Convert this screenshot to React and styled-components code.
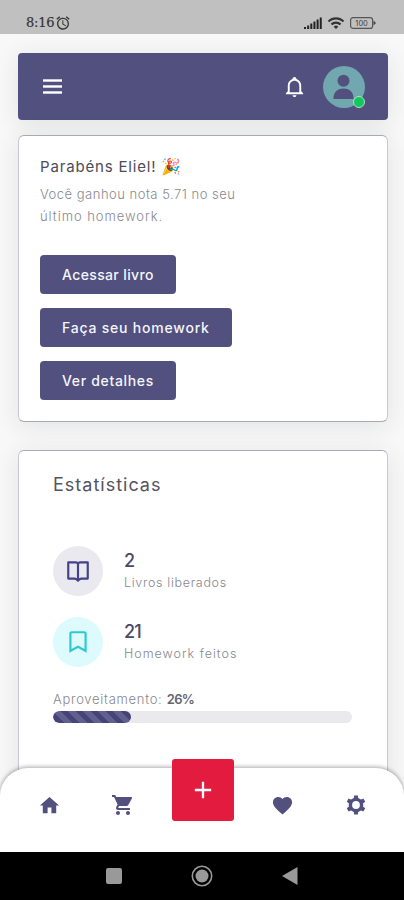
import React from 'react';
import styled, { createGlobalStyle } from 'styled-components'
import { BiBookmark, BiBookOpen } from 'react-icons/bi'
import {
    MdAdd,
    MdAlarm,
    MdFavorite,
    MdHome,
    MdShoppingCart,
    MdWifi,
} from 'react-icons/md'

const GlobalStyle = createGlobalStyle`
    * {
        box-sizing: border-box;
    }
    body {
        margin: 0;
        background: #f7f7f7;
        font-family: Inter, "Liberation Sans", sans-serif;
    }
    h1, h2, p {
        margin: 0;
    }
    svg {
        display: block;
        flex-shrink: 0;
    }
`

const Screen = styled.div`
    display: flex;
    flex-direction: column;
    height: 900px;
    overflow: hidden;
    background: #f8f8f8;
`

const StatusBar = styled.header`
    display: flex;
    justify-content: space-between;
    align-items: flex-end;
    height: 34px;
    flex-shrink: 0;
    padding: 0 28px 4px 26px;
    background: #c0c0c0;
    color: #333;
`

const StatusGroup = styled.div`
    display: flex;
    align-items: center;
    height: 15px;
    gap: ${props => props.$gap}px;
`

const Clock = styled.span`
    font: 13px "DejaVu Serif", serif;
    line-height: 15px;
    letter-spacing: -0.25px;
    -webkit-text-stroke: 0.2px #333;
`

const Content = styled.main`
    display: flex;
    flex-direction: column;
    flex: 1;
    min-height: 0;
    padding: 19px 16px 0 18px;
    overflow: hidden;
`

const Navbar = styled.nav`
    display: flex;
    align-items: center;
    height: 67px;
    flex-shrink: 0;
    margin-bottom: 15px;
    padding: 0 23px 0 25px;
    border-radius: 4px;
    background: #51507f;
    box-shadow: 0 4px 24px rgba(34, 41, 47, 0.1);
    color: #fff;
`

const NavRight = styled.div`
    display: flex;
    align-items: center;
    gap: 17px;
    margin-left: auto;
`

const Avatar = styled.div`
    position: relative;
    display: flex;
    align-items: center;
    justify-content: center;
    width: 42px;
    height: 42px;
    border-radius: 50%;
    background: #71a7ae;
    color: #51507f;
`

const Online = styled.span`
    position: absolute;
    right: 0;
    bottom: 0;
    width: 12px;
    height: 12px;
    border: 1px solid #b9dcc9;
    border-radius: 50%;
    background: #10c95c;
`

const Card = styled.section`
    display: flex;
    flex-direction: column;
    align-items: flex-start;
    height: ${props => props.$height}px;
    flex-shrink: 0;
    margin-bottom: 28px;
    padding: ${props => props.$padding};
    border: 1px solid #a9a9b2;
    border-left-color: #c9c8d6;
    border-right-color: #c9c8d6;
    border-radius: 6px;
    background: #fff;
    box-shadow: 0 4px 24px rgba(34, 41, 47, 0.1);
`

const Title = styled.h1`
    display: flex;
    align-items: center;
    height: 20px;
    color: #4d4c58;
    font-size: 15px;
    font-weight: 400;
    letter-spacing: 0.83px;
`

const Emoji = styled.span`
    margin-left: 5px;
    font-size: 16px;
    letter-spacing: 0;
`

const Message = styled.p`
    margin: 8px 0 28px;
    color: #88888e;
    font-size: 13px;
    font-weight: 300;
    line-height: 21.5px;
`

const MessageLine = styled.span`
    display: block;
    letter-spacing: ${props => props.$spacing}px;
`

const Button = styled.button`
    display: flex;
    align-items: center;
    width: ${props => props.$width}px;
    height: 39px;
    flex-shrink: 0;
    margin-bottom: 14px;
    padding: 0 0 0 22px;
    border: 0;
    border-radius: 4px;
    background: #51507f;
    color: #f5f5fa;
    font-family: inherit;
    font-size: 14px;
    font-weight: 500;
    letter-spacing: ${props => props.$spacing}px;
    white-space: nowrap;
`

const StatsTitle = styled.h2`
    margin-bottom: 49px;
    color: #55545f;
    font-size: 18px;
    font-weight: 400;
    line-height: 24px;
    letter-spacing: 1px;
`

const Stat = styled.div`
    display: flex;
    align-items: center;
    height: 50px;
    gap: 21px;
    margin-bottom: 21px;
`

const StatIcon = styled.div`
    display: flex;
    align-items: center;
    justify-content: center;
    width: 50px;
    height: 50px;
    border-radius: 50%;
    background: ${props => props.$bg};
    color: ${props => props.$color};
`

const StatText = styled.div`
    display: flex;
    flex-direction: column;
`

const StatValue = styled.span`
    color: #4a4864;
    font-size: 18px;
    font-weight: 500;
    line-height: 24px;
    letter-spacing: -0.9px;
`

const StatLabel = styled.span`
    color: #88888e;
    font-size: 12.5px;
    font-weight: 300;
    line-height: 20px;
    letter-spacing: ${props => props.$spacing}px;
`

const ProgressLabel = styled.p`
    color: #88888e;
    font-size: 13px;
    font-weight: 300;
    line-height: 22px;
    letter-spacing: 0.71px;

    b {
        color: #66656f;
        font-weight: 600;
        letter-spacing: -0.8px;
    }
`

const Track = styled.div`
    width: 299px;
    height: 12px;
    margin-top: 1px;
    border-radius: 6px;
    background: #e9e9ee;
    overflow: hidden;
`

const Bar = styled.div`
    height: 100%;
    border-radius: 6px;
    background-color: #454377;
    background-image: linear-gradient(
        45deg,
        rgba(255, 255, 255, 0.15) 25%,
        transparent 25%,
        transparent 50%,
        rgba(255, 255, 255, 0.15) 50%,
        rgba(255, 255, 255, 0.15) 75%,
        transparent 75%
    );
    background-size: 15px 15px;
`

const TabBar = styled.nav`
    position: relative;
    display: grid;
    grid-template-columns: 74px 74px 86px 73px 74px;
    justify-content: center;
    height: 84px;
    flex-shrink: 0;
    margin-top: -28px;
    padding: 0 0 10px 1px;
    border-radius: 28px 28px 0 0;
    background: #fff;
    box-shadow: 0 -1px 4px rgba(0, 0, 0, 0.35);
    color: #51507f;
`

const Tab = styled.div`
    display: flex;
    align-items: center;
    justify-content: center;
`

const AddButton = styled.div`
    display: flex;
    align-items: center;
    justify-content: center;
    width: 62px;
    height: 62px;
    margin-top: -9px;
    justify-self: center;
    border-radius: 3px;
    background: #e31b3e;
    color: #fff;
`

const SystemBar = styled.footer`
    display: flex;
    align-items: center;
    justify-content: center;
    gap: 69px;
    height: 48px;
    flex-shrink: 0;
    background: #000;
`

function MenuIcon() {
    return (
        <svg width="19" height="15" viewBox="0 0 19 15" fill="currentColor">
            <rect width="19" height="2.4" y="0.3" />
            <rect width="19" height="2.4" y="6.3" />
            <rect width="19" height="2.4" y="12.3" />
        </svg>
    )
}

function BellIcon() {
    return (
        <svg width="23" height="23" viewBox="0 0 24 24" fill="currentColor">
            <path d="M10 21H14C14 22.1 13.1 23 12 23S10 22.1 10 21M21 19V20H3V19L5 17V11C5 7.9 7.03 5.17 10 4.29V4C10 2.9 10.9 2 12 2S14 2.9 14 4V4.29C16.97 5.17 19 7.9 19 11V17L21 19M17 11C17 8.24 14.76 6 12 6S7 8.24 7 11V18H17V11Z" />
        </svg>
    )
}

function PersonIcon() {
    return (
        <svg width="42" height="42" viewBox="0 0 42 42" fill="currentColor">
            <circle cx="20.5" cy="14.7" r="6" />
            <path d="M10.5 33V31.5C11 25.5 15 22.5 20.5 22.5S30 25.5 30.5 31.5V33Z" />
        </svg>
    )
}

function GearIcon() {
    return (
        <svg width="20" height="20" viewBox="0 0 20 20">
            {[0, 60, 120, 180, 240, 300].map(angle => (
                <path
                    key={angle}
                    d="M7.6 4.5L8.1 0.4H11.9L12.4 4.5Z"
                    fill="currentColor"
                    transform={`rotate(${angle} 10 10)`}
                />
            ))}
            <circle cx="10" cy="10" r="5.6" fill="none" stroke="currentColor" strokeWidth="3.4" />
        </svg>
    )
}

function SignalIcon() {
    const heights = [2, 3.5, 5.5, 7.5, 9.5, 11.5]
    return (
        <svg width="18" height="12" viewBox="0 0 18 12" fill="#222">
            {heights.map((h, i) => (
                <rect key={h} x={i * 3.15} y={12 - h} width="2" height={h} />
            ))}
        </svg>
    )
}

function BatteryIcon() {
    return (
        <svg width="26" height="12" viewBox="0 0 26 12">
            <rect x="0.6" y="0.6" width="22" height="10.8" rx="2.5" fill="none" stroke="#555" strokeWidth="1.2" />
            <path d="M23.5 3.5L26 6L23.5 8.5Z" fill="#444" />
            <text x="11.6" y="8.8" fontSize="7.5" textAnchor="middle" fill="#444" fontFamily="Inter">100</text>
        </svg>
    )
}

function App() {
    const progress = 26

    return (
        <Screen>
            <GlobalStyle />
            <StatusBar>
                <StatusGroup $gap={1}>
                    <Clock>8:16</Clock>
                    <MdAlarm size={16} />
                </StatusGroup>
                <StatusGroup $gap={5}>
                    <SignalIcon />
                    <MdWifi size={18} />
                    <BatteryIcon />
                </StatusGroup>
            </StatusBar>

            <Content>
                <Navbar>
                    <MenuIcon />
                    <NavRight>
                        <BellIcon />
                        <Avatar>
                            <PersonIcon />
                            <Online />
                        </Avatar>
                    </NavRight>
                </Navbar>

                <Card $height={287} $padding="20px 21px">
                    <Title>Parabéns Eliel!<Emoji>🎉</Emoji></Title>
                    <Message>
                        <MessageLine $spacing={0.5}>Você ganhou nota 5.71 no seu</MessageLine>
                        <MessageLine $spacing={0.95}>último homework.</MessageLine>
                    </Message>
                    <Button $width={136} $spacing={0.37}>Acessar livro</Button>
                    <Button $width={192} $spacing={0.79}>Faça seu homework</Button>
                    <Button $width={136} $spacing={0.67}>Ver detalhes</Button>
                </Card>

                <Card $height={400} $padding="22px 34px">
                    <StatsTitle>Estatísticas</StatsTitle>
                    <Stat>
                        <StatIcon $bg="#e9e9ef" $color="#45418a">
                            <BiBookOpen size={26} />
                        </StatIcon>
                        <StatText>
                            <StatValue>2</StatValue>
                            <StatLabel $spacing={0.68}>Livros liberados</StatLabel>
                        </StatText>
                    </Stat>
                    <Stat>
                        <StatIcon $bg="#ddfafd" $color="#2cc9d3">
                            <BiBookmark size={26} />
                        </StatIcon>
                        <StatText>
                            <StatValue>21</StatValue>
                            <StatLabel $spacing={1}>Homework feitos</StatLabel>
                        </StatText>
                    </Stat>
                    <ProgressLabel>Aproveitamento: <b>{progress}%</b></ProgressLabel>
                    <Track>
                        <Bar style={{ width: progress + '%' }} />
                    </Track>
                </Card>
            </Content>

            <TabBar>
                <Tab><MdHome size={23} /></Tab>
                <Tab><MdShoppingCart size={24} /></Tab>
                <AddButton><MdAdd size={28} /></AddButton>
                <Tab><MdFavorite size={23} /></Tab>
                <Tab><GearIcon /></Tab>
            </TabBar>

            <SystemBar>
                <svg width="16" height="16" viewBox="0 0 16 16">
                    <rect width="16" height="16" rx="2" fill="#999" />
                </svg>
                <svg width="22" height="22" viewBox="0 0 22 22">
                    <circle cx="11" cy="11" r="9.7" fill="none" stroke="#999" strokeWidth="1.6" />
                    <circle cx="11" cy="11" r="6.5" fill="#999" />
                </svg>
                <svg width="16" height="18" viewBox="0 0 16 18">
                    <path d="M15.5 0V18L0 9Z" fill="#999" />
                </svg>
            </SystemBar>
        </Screen>
    );
}
export default App;
